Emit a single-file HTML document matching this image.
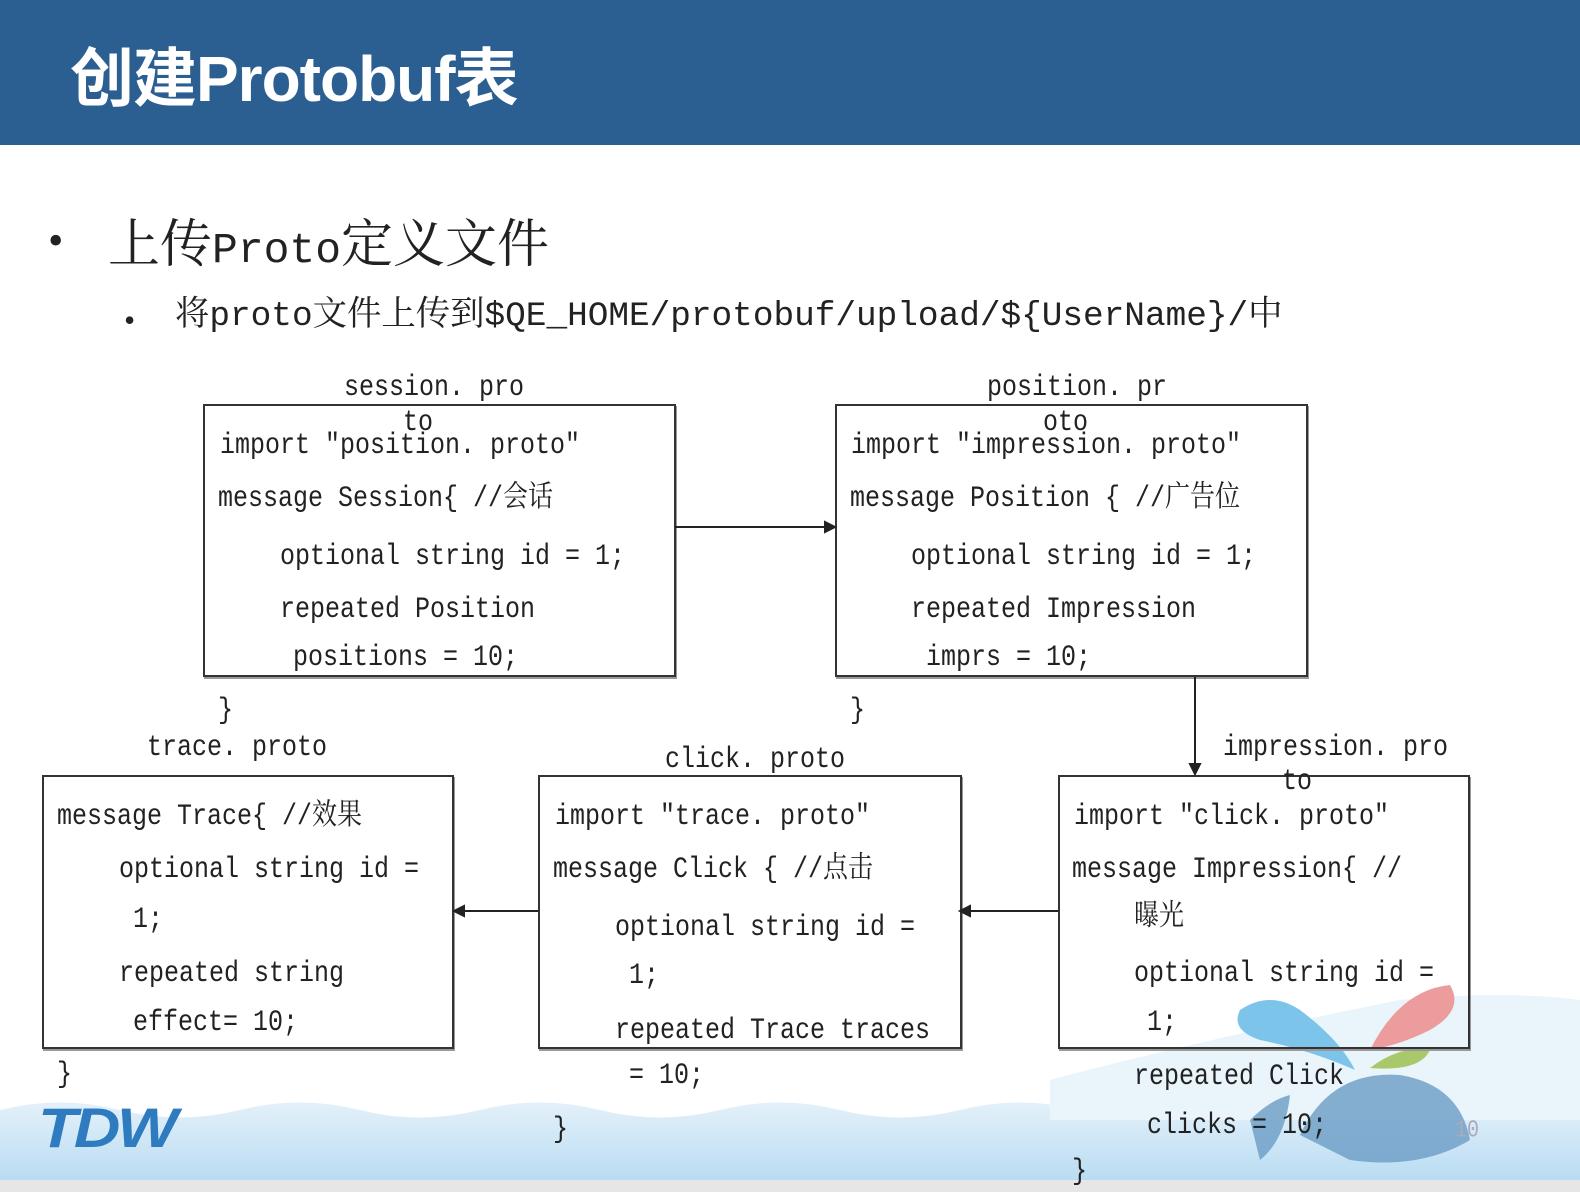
<!DOCTYPE html>
<html><head><meta charset="utf-8">
<style>
html,body{margin:0;padding:0}
body{width:1580px;height:1192px;position:relative;overflow:hidden;background:#fff;font-family:"Liberation Serif","Noto Serif CJK SC",serif}
.hdr{position:absolute;left:0;top:0;width:1580px;height:145px;background:#2b5f92}
.title{position:absolute;left:70px;top:42px;font:bold 64px/74px "Liberation Sans","Noto Sans CJK SC",sans-serif;color:#fff;letter-spacing:-1px}
.dot{position:absolute;font-family:"Liberation Serif",serif;color:#222}
.b1{position:absolute;left:108px;top:208px;font-size:52px;line-height:64px;color:#222;white-space:pre;font-family:"Noto Serif CJK SC",serif}
.b1 .m{font-family:"Liberation Mono",monospace;font-size:43px}
.b2{position:absolute;left:175px;top:294px;font:34.4px/46px "Liberation Mono","Noto Serif CJK SC",monospace;color:#222;white-space:pre}
.t{position:absolute;font:25px/30px "Liberation Mono","Noto Serif CJK SC",monospace;color:#222;white-space:pre;transform:translateY(5px) scaleY(1.18);transform-origin:0 50%}
.box{position:absolute;border:2px solid #333;box-shadow:1px 2px 0 #999}
</style></head><body>
<svg style="position:absolute;left:0;top:0" width="1580" height="1192">
<defs><linearGradient id="w" x1="0" y1="0" x2="0" y2="1"><stop offset="0" stop-color="#e4f1fa"/><stop offset="1" stop-color="#b9dcf2"/></linearGradient></defs>
<path d="M0 1110 Q60 1095 120 1110 T240 1110 T360 1110 T480 1110 T600 1110 T720 1110 T840 1110 T960 1110 T1080 1110 T1200 1110 T1320 1110 T1440 1110 T1580 1105 L1580 1180 L0 1180Z" fill="url(#w)"/>
<path d="M1050 1080 Q1200 1040 1400 1000 Q1500 990 1580 1000 L1580 1120 L1050 1120Z" fill="#eaf4fb"/>
<rect x="0" y="1180" width="1580" height="12" fill="#e6e6e6"/>
<path d="M1240 1010 Q1270 990 1300 1010 Q1340 1040 1355 1070 Q1310 1050 1260 1040 Q1230 1030 1240 1010Z" fill="#7cc4ea"/>
<path d="M1370 1050 Q1400 990 1450 985 Q1465 1010 1430 1030 Q1400 1045 1370 1050Z" fill="#ec9c9c"/>
<path d="M1370 1068 Q1400 1045 1430 1050 Q1420 1072 1370 1068Z" fill="#a9c86a"/>
<path d="M1300 1135 Q1330 1070 1400 1075 Q1460 1085 1470 1140 Q1420 1170 1350 1160Z" fill="#6a9cc6" opacity=".8"/>
<path d="M1250 1120 Q1270 1100 1290 1095 Q1285 1140 1260 1160Z" fill="#6a9cc6" opacity=".8"/>
</svg>
<div style="position:absolute;left:38px;top:1098px;font:italic bold 56px/60px 'Liberation Sans',sans-serif;color:#2f7bbf;letter-spacing:-3px;transform:scaleX(1.15);transform-origin:0 0">TDW</div>
<div class="hdr"></div>
<div class="title">创建Protobuf表</div>
<div class="dot" style="left:48px;top:216px;font-size:44px;line-height:50px">•</div>
<div class="b1">上传<span class="m">Proto</span>定义文件</div>
<div class="dot" style="left:124px;top:300px;font-size:32px;line-height:40px">•</div>
<div class="b2">将proto文件上传到$QE_HOME/protobuf/upload/${UserName}/中</div>

<div class="box" style="left:203px;top:404px;width:469px;height:269px"></div>
<div class="box" style="left:835px;top:404px;width:469px;height:269px"></div>
<div class="box" style="left:42px;top:775px;width:408px;height:270px"></div>
<div class="box" style="left:538px;top:775px;width:420px;height:270px"></div>
<div class="box" style="left:1058px;top:775px;width:408px;height:270px"></div>

<svg style="position:absolute;left:0;top:0" width="1580" height="1192">
<g stroke="#222" stroke-width="2" fill="#222">
<line x1="675" y1="527" x2="828" y2="527"/><path d="M835 527 L825 522 L825 532Z"/>
<line x1="1195" y1="677" x2="1195" y2="766"/><path d="M1195 774 L1190 764 L1200 764Z"/>
<line x1="1058" y1="911" x2="968" y2="911"/><path d="M960 911 L970 906 L970 916Z"/>
<line x1="538" y1="911" x2="462" y2="911"/><path d="M454 911 L464 906 L464 916Z"/>
</g></svg>

<div class="t" style="left:344px;top:368px">session. pro</div>
<div class="t" style="left:403px;top:403px">to</div>
<div class="t" style="left:220px;top:426px">import ″position. proto″</div>
<div class="t" style="left:218px;top:479px">message Session{ //会话</div>
<div class="t" style="left:280px;top:537px">optional string id = 1;</div>
<div class="t" style="left:280px;top:590px">repeated Position</div>
<div class="t" style="left:293px;top:638px">positions = 10;</div>
<div class="t" style="left:218px;top:691px">}</div>

<div class="t" style="left:987px;top:368px">position. pr</div>
<div class="t" style="left:1043px;top:403px">oto</div>
<div class="t" style="left:851px;top:426px">import ″impression. proto″</div>
<div class="t" style="left:850px;top:479px">message Position { //广告位</div>
<div class="t" style="left:911px;top:537px">optional string id = 1;</div>
<div class="t" style="left:911px;top:590px">repeated Impression</div>
<div class="t" style="left:926px;top:638px">imprs = 10;</div>
<div class="t" style="left:850px;top:691px">}</div>

<div class="t" style="left:147px;top:728px">trace. proto</div>
<div class="t" style="left:57px;top:797px">message Trace{ //效果</div>
<div class="t" style="left:119px;top:850px">optional string id =</div>
<div class="t" style="left:133px;top:900px">1;</div>
<div class="t" style="left:119px;top:954px">repeated string</div>
<div class="t" style="left:133px;top:1003px">effect= 10;</div>
<div class="t" style="left:57px;top:1055px">}</div>

<div class="t" style="left:665px;top:740px">click. proto</div>
<div class="t" style="left:555px;top:797px">import ″trace. proto″</div>
<div class="t" style="left:553px;top:850px">message Click { //点击</div>
<div class="t" style="left:615px;top:908px">optional string id =</div>
<div class="t" style="left:629px;top:956px">1;</div>
<div class="t" style="left:615px;top:1011px">repeated Trace traces</div>
<div class="t" style="left:629px;top:1056px">= 10;</div>
<div class="t" style="left:553px;top:1110px">}</div>

<div class="t" style="left:1223px;top:728px">impression. pro</div>
<div class="t" style="left:1282px;top:762px">to</div>
<div class="t" style="left:1074px;top:797px">import ″click. proto″</div>
<div class="t" style="left:1072px;top:850px">message Impression{ //</div>
<div class="t" style="left:1134px;top:898px">曝光</div>
<div class="t" style="left:1134px;top:954px">optional string id =</div>
<div class="t" style="left:1147px;top:1003px">1;</div>
<div class="t" style="left:1134px;top:1057px">repeated Click</div>
<div class="t" style="left:1147px;top:1106px">clicks = 10;</div>
<div class="t" style="left:1072px;top:1152px">}</div>
<div class="t" style="left:1455px;top:1112px;color:#aab;font-size:20px">10</div>
</body></html>
